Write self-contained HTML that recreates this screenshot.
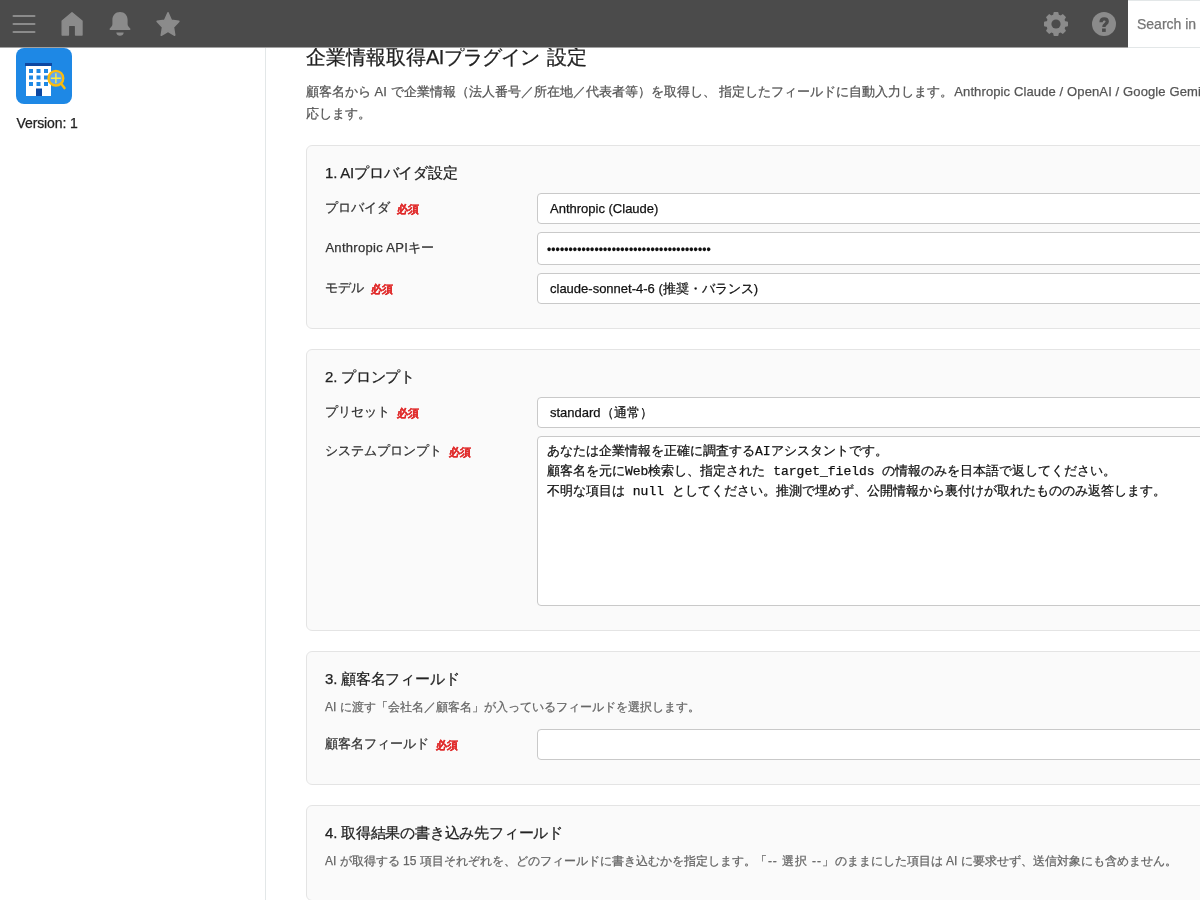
<!DOCTYPE html>
<html lang="ja">
<head>
<meta charset="utf-8">
<title>企業情報取得AIプラグイン 設定</title>
<style>
  * { box-sizing: border-box; }
  html, body { margin: 0; padding: 0; }
  body {
    width: 1200px; height: 900px; overflow: hidden; position: relative;
    background: #fff; color: #333;
    font-family: "Liberation Sans", sans-serif; font-size: 13px;
    -webkit-text-stroke: 0.25px currentColor;
  }
  #topbar, #sidebar, #main { will-change: transform; }
  /* ---------- top bar ---------- */
  #topbar { position: absolute; left: 0; top: 0; width: 1200px; height: 48px; background: #4b4b4b; border-bottom: 1px solid #a2a2a2; z-index: 10; }
  #topbar svg { position: absolute; }
  #search {
    position: absolute; left: 1128px; top: 0; width: 72px; height: 48px; background: #fff;
    border-top: 1px solid #e3e7e8; border-bottom: 1px solid #e3e7e8;
    color: #757575; font-size: 14px; line-height: 46px; padding-left: 9px; white-space: nowrap; overflow: hidden;
  }
  /* ---------- sidebar ---------- */
  #sidebar { position: absolute; left: 0; top: 48px; width: 266px; height: 852px; border-right: 1px solid #e3e7e8; background: #fff; }
  #appicon { position: absolute; left: 16px; top: 0; width: 56px; height: 56px; }
  #version { position: absolute; left: 16.5px; top: 66px; letter-spacing: -0.1px; font-size: 14px; line-height: 18px; color: #222; white-space: nowrap; }
  /* ---------- main ---------- */
  #main { position: absolute; left: 266px; top: 48px; width: 934px; height: 852px; overflow: hidden; }
  h1 { position: absolute; left: 40px; top: -6px; margin: 0; font-size: 20px; line-height: 30px; font-weight: normal; color: #222; white-space: nowrap; }
  #desc { position: absolute; left: 40px; top: 33px; margin: 0; font-size: 13px; line-height: 22px; color: #555; white-space: nowrap; }
  .sec { position: absolute; left: 40px; width: 940px; background: #fafafa; border: 1px solid #e4e4e4; border-radius: 6px; }
  .sec h2 { position: absolute; left: 18px; margin: 0; letter-spacing: -0.2px; font-size: 15px; line-height: 20px; font-weight: normal; color: #222; white-space: nowrap; }
  .sec .note { position: absolute; left: 18px; margin: 0; font-size: 12px; line-height: 18px; color: #666; white-space: nowrap; }
  .lbl { position: absolute; left: 18px; font-size: 13px; line-height: 20px; color: #333; white-space: nowrap; }
  .req { color: #e02b2b; font-size: 11px; font-weight: bold; margin-left: 7px; position: relative; top: 0.5px; }
  .ctl { position: absolute; left: 230px; width: 720px; background: #fff; border: 1px solid #c9c9c9; border-radius: 4px; color: #111; font-size: 13px; white-space: nowrap; overflow: hidden; }
  .sel { height: 31px; line-height: 29px; padding-left: 12px; }
  .inp { height: 33px; line-height: 31px; padding-top: 2px; padding-left: 9px; font-size: 12px; letter-spacing: 0.11px; }
  .ta { font-family: "Liberation Mono", monospace; font-size: 13px; line-height: 20px; padding: 5px 9px; color: #111; }
</style>
</head>
<body>

<div id="topbar">
  <!-- hamburger -->
  <svg style="left:12px;top:12px" width="24" height="24" viewBox="0 0 24 24"><g fill="#8b8b8b"><rect x="0.5" y="3" width="23" height="2" rx="1"/><rect x="0.5" y="11" width="23" height="2" rx="1"/><rect x="0.5" y="19" width="23" height="2" rx="1"/></g></svg>
  <!-- home -->
  <svg style="left:60px;top:12px" width="24" height="24" viewBox="0 0 24 24"><path fill="#8b8b8b" stroke="#8b8b8b" stroke-width="1.4" stroke-linejoin="round" d="M12 0.8 L22 9.1 V23.1 H15.6 V14.5 a1.2 1.2 0 0 0 -1.2 -1.2 H9.6 a1.2 1.2 0 0 0 -1.2 1.2 V23.1 H2.2 V9.1 Z"/></svg>
  <!-- bell -->
  <svg style="left:108px;top:12px" width="24" height="24" viewBox="0 0 24 24"><path fill="#8b8b8b" d="M12 0 C7.4 0 4.4 3.4 4.4 7.8 V12 C4.4 13.6 3.4 14.9 1.8 16.5 a0.8 0.8 0 0 0 .6 1.4 H21.6 a0.8 0.8 0 0 0 .6 -1.4 C20.6 14.9 19.6 13.6 19.6 12 V7.8 C19.6 3.4 16.6 0 12 0 Z M8.3 20.5 H15.7 C15.5 22.6 14 23.8 12 23.8 C10 23.8 8.5 22.6 8.3 20.5 Z"/></svg>
  <!-- star -->
  <svg style="left:156px;top:12px;overflow:visible" width="24" height="24" viewBox="0 0 24 24"><path fill="#8b8b8b" stroke="#8b8b8b" stroke-width="1.6" stroke-linejoin="round" d="M12.00 0.80 L15.35 8.26 L22.84 9.37 L17.42 15.09 L18.70 23.23 L12.00 19.30 L5.30 23.23 L6.58 15.09 L1.16 9.37 L8.65 8.26 Z"/></svg>
  <!-- gear -->
  <svg style="left:1044px;top:12px" width="24" height="24" viewBox="0 0 24 24"><g fill="#8b8b8b"><circle cx="12" cy="12" r="9.7"/><path d="M9.5 0.9 a0.9 0.9 0 0 1 .9 -.9 h3.2 a0.9 0.9 0 0 1 .9 .9 L15 4 H9 Z" transform="rotate(0 12 12)"/><path d="M9.5 0.9 a0.9 0.9 0 0 1 .9 -.9 h3.2 a0.9 0.9 0 0 1 .9 .9 L15 4 H9 Z" transform="rotate(45 12 12)"/><path d="M9.5 0.9 a0.9 0.9 0 0 1 .9 -.9 h3.2 a0.9 0.9 0 0 1 .9 .9 L15 4 H9 Z" transform="rotate(90 12 12)"/><path d="M9.5 0.9 a0.9 0.9 0 0 1 .9 -.9 h3.2 a0.9 0.9 0 0 1 .9 .9 L15 4 H9 Z" transform="rotate(135 12 12)"/><path d="M9.5 0.9 a0.9 0.9 0 0 1 .9 -.9 h3.2 a0.9 0.9 0 0 1 .9 .9 L15 4 H9 Z" transform="rotate(180 12 12)"/><path d="M9.5 0.9 a0.9 0.9 0 0 1 .9 -.9 h3.2 a0.9 0.9 0 0 1 .9 .9 L15 4 H9 Z" transform="rotate(225 12 12)"/><path d="M9.5 0.9 a0.9 0.9 0 0 1 .9 -.9 h3.2 a0.9 0.9 0 0 1 .9 .9 L15 4 H9 Z" transform="rotate(270 12 12)"/><path d="M9.5 0.9 a0.9 0.9 0 0 1 .9 -.9 h3.2 a0.9 0.9 0 0 1 .9 .9 L15 4 H9 Z" transform="rotate(315 12 12)"/></g><circle cx="12" cy="12" r="4.6" fill="#4b4b4b"/></svg>
  <!-- help -->
  <svg style="left:1092px;top:12px" width="24" height="24" viewBox="0 0 24 24"><circle cx="12" cy="12" r="12" fill="#8b8b8b"/><path fill="none" stroke="#4b4b4b" stroke-width="3.3" d="M9.05 10.3 C9.05 7.9 10.3 6.85 12.15 6.85 C14.1 6.85 15.25 7.9 15.25 9.5 C15.25 12 11.9 12 11.9 14.9"/><rect x="10.05" y="16.5" width="3.7" height="3.4" fill="#4b4b4b"/></svg>
  <div id="search">Search in</div>
</div>

<div id="sidebar">
  <svg id="appicon" viewBox="0 0 56 56">
    <rect width="56" height="56" rx="8" fill="#1e88e5"/>
    <rect x="9" y="15" width="27" height="3" fill="#0d47a1"/>
    <rect x="10" y="18" width="25" height="30" fill="#fff"/>
    <g fill="#1e88e5">
      <rect x="13" y="21" width="4" height="4"/><rect x="20.5" y="21" width="4" height="4"/><rect x="28" y="21" width="4" height="4"/>
      <rect x="13" y="27.5" width="4" height="4"/><rect x="20.5" y="27.5" width="4" height="4"/><rect x="28" y="27.5" width="4" height="4"/>
      <rect x="13" y="34" width="4" height="4"/><rect x="20.5" y="34" width="4" height="4"/><rect x="28" y="34" width="4" height="4"/>
    </g>
    <rect x="20" y="40.5" width="6" height="7.5" fill="#0d47a1"/>
    <circle cx="39.9" cy="30.2" r="7.35" fill="#62a8ef" stroke="#fabb0e" stroke-width="2.4"/>
    <path d="M39.9 25.2 V35.2 M34.9 30.2 H44.9" stroke="#ffeb3b" stroke-width="1.4" fill="none"/>
    <path d="M45.2 35.8 L48.5 40.1" stroke="#fabb0e" stroke-width="2.5" stroke-linecap="round"/>
  </svg>
  <div id="version">Version: 1</div>
</div>

<div id="main">
  <h1>企業情報取得<span style="letter-spacing:-0.6px">AI</span><span style="letter-spacing:-1px">プラグイン</span><span style="margin-left:2.5px"> </span>設定</h1>
  <p id="desc">顧客名から AI で企業情報（法人番号／所在地／代表者等）を取得し、 指定したフィールドに自動入力します。 <span style="margin-left:-2.5px;letter-spacing:0.12px">Anthropic Claude / OpenAI / Google Gemini</span> の 3 社に対<br>応します。</p>

  <!-- section 1 -->
  <div class="sec" style="top:97px;height:184px">
    <h2 style="top:17px">1. AIプロバイダ設定</h2>
    <div class="lbl" style="top:52px">プロバイダ<span class="req">必須</span></div>
    <div class="ctl sel" style="top:47px">Anthropic (Claude)</div>
    <div class="lbl" style="top:92px;left:18.4px"><span style="letter-spacing:0.3px">Anthropic API</span>キー</div>
    <div class="ctl inp" style="top:86px">••••••••••••••••••••••••••••••••••••••</div>
    <div class="lbl" style="top:132px">モデル<span class="req">必須</span></div>
    <div class="ctl sel" style="top:127px">claude-sonnet-4-6 (推奨・バランス)</div>
  </div>

  <!-- section 2 -->
  <div class="sec" style="top:301px;height:282px">
    <h2 style="top:17px">2. プロンプト</h2>
    <div class="lbl" style="top:52px">プリセット<span class="req">必須</span></div>
    <div class="ctl sel" style="top:47px">standard（通常）</div>
    <div class="lbl" style="top:91px">システムプロンプト<span class="req">必須</span></div>
    <div class="ctl ta" style="top:86px;height:170px">あなたは企業情報を正確に調査するAIアシスタントです。<br>顧客名を元にWeb検索し、指定された target_fields の情報のみを日本語で返してください。<br>不明な項目は null としてください。推測で埋めず、公開情報から裏付けが取れたもののみ返答します。</div>
  </div>

  <!-- section 3 -->
  <div class="sec" style="top:603px;height:134px">
    <h2 style="top:17px">3. 顧客名フィールド</h2>
    <p class="note" style="top:46px">AI に渡す「会社名／顧客名」が入っているフィールドを選択します。</p>
    <div class="lbl" style="top:82px">顧客名フィールド<span class="req">必須</span></div>
    <div class="ctl sel" style="top:77px"></div>
  </div>

  <!-- section 4 -->
  <div class="sec" style="top:757px;height:96px">
    <h2 style="top:17px">4. 取得結果の書き込み先フィールド</h2>
    <p class="note" style="top:46px">AI が取得する 15 項目それぞれを、どのフィールドに書き込むかを指定します。 <span style="margin-left:-4px;letter-spacing:0.9px">「-- 選択 --」</span>のままにした項目は AI に要求せず、送信対象にも含めません。</p>
  </div>
</div>

</body>
</html>
